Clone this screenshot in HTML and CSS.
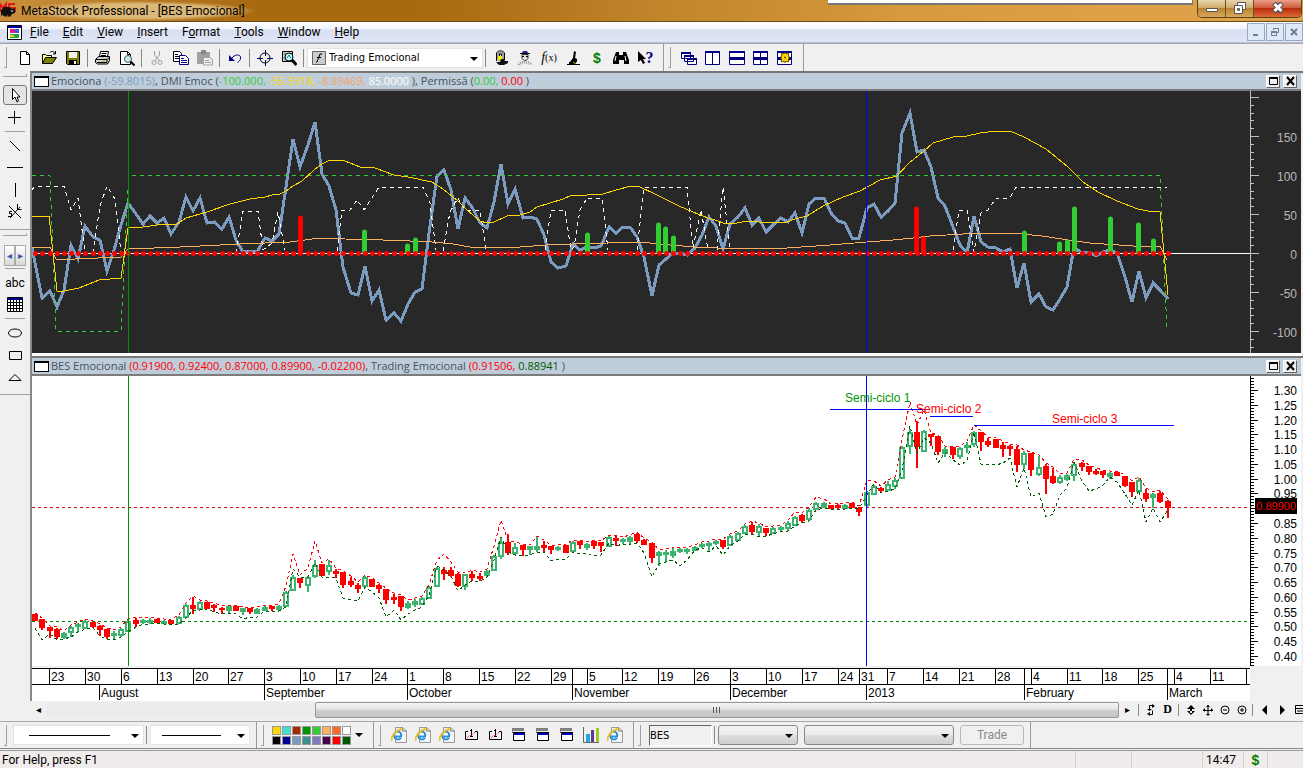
FILE: index.html
```
<!DOCTYPE html>
<html lang="en">
<head>
    <meta charset="utf-8">
    <title>MetaStock Professional - [BES Emocional]</title>
    <link rel="stylesheet" href="styles.css">
</head>
<body>
    <!-- shared icons -->
    <svg class="symbols" width="0" height="0">
        <symbol id="ie" viewBox="0 0 16 16">
            <path d="M4.500.5h7l4 3.500v11.500h-11z" fill="#f6f6f6" stroke="#999"/>
            <path d="M11.500.5v3.500h4" fill="none" stroke="#777"/>
            <path d="M10 9.500H3.500a3.500 3.500 0 1 1 6.700-1.500z" fill="#fff" stroke="#2a8fd8" stroke-width="2"/>
            <path d="M3.500 9.500a3.500 3.500 0 0 0 6.300 1.500" fill="none" stroke="#2a8fd8" stroke-width="2"/>
            <path d="M1 13.500C-1 10 7 1 11.500 2.500" fill="none" stroke="#f0c020" stroke-width="2"/>
        </symbol>
        <symbol id="gap" viewBox="0 0 16 16">
            <path d="M5 4.500H2.500v8h12v-8H12" fill="none" stroke="#000"/>
            <path d="M8.500 2v8M7 3.500h1.500M7 9.500h3" fill="none" stroke="#000"/>
            <path d="M4 11l3-3 1 1 4-4" fill="none" stroke="#e00" stroke-dasharray="1 1"/>
        </symbol>
        <symbol id="win" viewBox="0 0 16 16">
            <path d="M1 1h12v3H1z" fill="#808080"/>
            <path d="M2.500 6.500h11v7h-11z" fill="#fff" stroke="#000"/>
            <path d="M2 5h12v1H2z" fill="#000"/>
            <path d="M3 6h10v2H3z" fill="#0000c0"/>
            <path d="M1.500 4v2" stroke="#808080"/>
        </symbol>
    </svg>

    <header class="titlebar">
        <svg class="logo" width="16" height="18" viewBox="0 0 16 18">
            <path d="M0 12V4l3 4 3-4v8M15 4H9v4h6v3H8" fill="none" stroke="#e01818" stroke-width="2"/>
            <path d="M1 10l3-3h5l3 2 3-1v5l-3 1-2 3-2-2-3 2-2-3-2 2z" fill="#111"/>
            <path d="M3 16l2-5M8 17l1-5" stroke="#111"/>
            <path d="M11 10h2v2h-2z" fill="#59b"/>
        </svg>
        <h1>MetaStock Professional - [BES Emocional]</h1>
        <div class="behind"></div>
        <div class="winbuttons">
            <button aria-label="Minimize"><svg width="14" height="12"><path d="M1.500 6.500h11v3h-11z" fill="#fff" stroke="#555"/></svg></button>
            <button aria-label="Restore"><svg width="14" height="12"><path d="M4.500.5h8v7h-8z" fill="#fff" stroke="#555"/><path d="M1.500 3.500h8v8h-8z" fill="#fff" stroke="#555"/><path d="M4.500 6.500h2v2h-2z" fill="#c93" stroke="#555"/></svg></button>
            <button class="close" aria-label="Close"><svg width="14" height="12"><path d="M3 1l8 9M11 1l-8 9" stroke="#555" stroke-width="5"/><path d="M3.500 2l7 7M10.500 2l-7 7" stroke="#fff" stroke-width="3"/></svg></button>
        </div>
    </header>

    <nav class="menubar">
        <svg class="docicon" width="15" height="15"><path d="M.5.5h14v14H.5z" fill="#fff" stroke="#000"/><path d="M1 1h13v2H1z" fill="#0000a0"/><path d="M3 4h9v4H3z" fill="#e0207a"/><path d="M8 4h4v4H8z" fill="#3060e0"/><path d="M3 9h9v4H3z" fill="#20a040"/><path d="M3 10h4v2H3z" fill="#f0d020"/></svg>
        <a href="#"><u>F</u>ile</a>
        <a href="#"><u>E</u>dit</a>
        <a href="#"><u>V</u>iew</a>
        <a href="#"><u>I</u>nsert</a>
        <a href="#">F<u>o</u>rmat</a>
        <a href="#"><u>T</u>ools</a>
        <a href="#"><u>W</u>indow</a>
        <a href="#"><u>H</u>elp</a>
        <div class="mdi">
            <button aria-label="Minimize document"><svg width="10" height="10"><path d="M2 7h5v2H2z" fill="#6b7f96"/></svg></button>
            <button aria-label="Restore document"><svg width="10" height="10"><path d="M3.500 3V1.500h5v4H7M1.500 4.500h5v4h-5z" fill="none" stroke="#6b7f96"/><path d="M3 1h6v1H3zM1 4h6v2H1z" fill="#6b7f96"/></svg></button>
            <button aria-label="Close document"><svg width="10" height="10"><path d="M2 2l6 6M8 2L2 8" stroke="#6b7f96" stroke-width="2"/></svg></button>
        </div>
    </nav>

    <div class="toolbar">
        <i class="grip"></i>
        <button aria-label="New"><svg width="16" height="16"><path d="M3.500 1.500h6l3 3v10h-9z" fill="#fff" stroke="#000"/><path d="M9.500 1.500v3h3" fill="none" stroke="#000"/></svg></button>
        <button aria-label="Open"><svg width="16" height="16"><path d="M1.500 13.500v-9h3l1 1h5v2" fill="#ff9" stroke="#000"/><path d="M1.500 13.500l3-6h11l-4 6z" fill="#808000" stroke="#000"/><path d="M9 2.500c2-2 4-1 5 1M14.500 1v3H12" fill="none" stroke="#000"/></svg></button>
        <button aria-label="Save"><svg width="16" height="16"><path d="M1.500 1.500h13v13h-12l-1-1z" fill="#808000" stroke="#000"/><path d="M4 2h8v6H4z" fill="#f0f0f0"/><path d="M4 10h8v4H4z" fill="#000"/><path d="M9 11h2v3H9z" fill="#fff"/></svg></button>
        <i class="sep"></i>
        <button aria-label="Print"><svg width="16" height="16"><path d="M4.500 6.500l1-5h8l-1 5" fill="#fff" stroke="#000"/><path d="M6.500 3.500h5M6 5.500h5" stroke="#000"/><path d="M.5 9.500l3-3h11v4l-2 3.500H2.500l-2-1.500z" fill="#ccc" stroke="#000"/><path d="M1 9.500h11l2-2M2 12.500h10v-3" fill="none" stroke="#000"/><path d="M7 11h3" stroke="#cc0"/></svg></button>
        <button aria-label="Print preview"><svg width="16" height="16"><path d="M1.500 1.500h7l3 3v10h-10z" fill="#fff" stroke="#000"/><path d="M8.500 1.500v3h3" fill="none" stroke="#000"/><circle cx="9" cy="9" r="3.500" fill="#bfeeee" stroke="#555"/><path d="M11.500 11.500l4 4" stroke="#000" stroke-width="2"/></svg></button>
        <i class="sep"></i>
        <button aria-label="Cut"><svg width="16" height="16"><path d="M5.500 1v4l5 6M10.500 1v4l-5 6" fill="none" stroke="#a0a0a0"/><circle cx="5" cy="12.500" r="2" fill="none" stroke="#a0a0a0"/><circle cx="11" cy="12.500" r="2" fill="none" stroke="#a0a0a0"/></svg></button>
        <button aria-label="Copy"><svg width="16" height="16"><path d="M.5 1.500h6l2 2v8h-8z" fill="#fff" stroke="#000"/><path d="M2 4.500h3M2 6.500h5M2 8.500h5" stroke="#000"/><path d="M6.500 5.500h6l3 3v6h-9z" fill="#fff" stroke="#000080"/><path d="M8 8.500h3M8 10.500h6M8 12.500h6" stroke="#000080"/></svg></button>
        <button aria-label="Paste"><svg width="16" height="16"><path d="M0 2h13v12H0z" fill="#a0a0a0"/><path d="M4 0h5v4H4z" fill="#888"/><path d="M6.500 7.500h6l3 2v5.500h-9z" fill="#f0f0f0" stroke="#a0a0a0"/><path d="M8 10.500h4M8 12.500h6" stroke="#a0a0a0"/></svg></button>
        <i class="sep"></i>
        <button aria-label="Undo"><svg width="16" height="16"><path d="M2 5v6h6z" fill="#000080"/><path d="M5 8c3-4 9-4 8.500 0 0 2-1 3-3 4.500" fill="none" stroke="#000080"/></svg></button>
        <i class="sep"></i>
        <button aria-label="Crosshair"><svg width="16" height="16"><circle cx="8" cy="8" r="5" fill="none" stroke="#000"/><path d="M8.500 0v6M8.500 10v6M0 8.500h6M10 8.500h6" stroke="#000080"/></svg></button>
        <button aria-label="Zoom chart"><svg width="16" height="16"><path d="M1.500 1.500h10v10h-10z" fill="#ddd" stroke="#000"/><path d="M2 4h9M2 8h9M4 2v9" stroke="#888"/><circle cx="8" cy="7" r="4" fill="#bff" stroke="#000"/><path d="M6 8l2-3 2 3" stroke="#088" fill="none"/><path d="M11 10l4.500 5" stroke="#000" stroke-width="3"/></svg></button>
        <i class="sep"></i>
        <div class="combo white indicator">
            <svg width="14" height="14"><path d="M.5.5h13v13H.5z" fill="#ccc" stroke="#666"/><path d="M4 11h1l3-8h2M5 6.500h4" fill="none" stroke="#000"/></svg>
            <select aria-label="Indicator"><option>Trading Emocional</option></select>
        </div>
        <i class="sep"></i>
        <button aria-label="System tester"><svg width="16" height="16"><path d="M3.500 11V3l2-2h4l2 2v7" fill="#eee" stroke="#000"/><path d="M5 3h5v7H5z" fill="#fff" stroke="#555"/><path d="M5 6h4v4H5z" fill="#ee0"/><path d="M6.500 6V4h2v2" fill="none" stroke="#000"/><path d="M8 9h3l1 2h3v2l-4 2H6l-3-3h4z" fill="#111"/></svg></button>
        <button aria-label="Expert advisor"><svg width="16" height="16"><path d="M5 3l1-2h4l1 2z" fill="#229"/><path d="M3 3.500h10M5 6.500h2M9 6.500h2" stroke="#000"/><path d="M5 4.500h6v4l-2 2H7l-2-2z" fill="#ddd" stroke="#333"/><path d="M5 6.500h2M9 6.500h2" stroke="#000"/><path d="M2 15c1-4 11-4 12 0" fill="none" stroke="#999" stroke-width="3" stroke-dasharray="1 1"/></svg></button>
        <button class="fx" aria-label="Indicator builder"><em>f</em><small>(x)</small></button>
        <button aria-label="The Explorer"><svg width="16" height="16"><path d="M9 1l2 1-1 6 2 1v3H5l3-4z" fill="#000"/><path d="M2 14.500h13" stroke="#000"/><path d="M4 12h7v2H4z"/><path d="M8 12l3 2" stroke="#cc0"/></svg></button>
        <button class="dollar" aria-label="Quote center">$</button>
        <button aria-label="Find"><svg width="16" height="16"><path d="M3 2h3v3h4V2h3l3 8v4h-5v-4H6v4H0v-4z" fill="#000"/><path d="M3 6l-1 5M12 6l1 5" stroke="#fff"/></svg></button>
        <button class="help" aria-label="Context help"><svg width="9" height="14"><path d="M1 0v11l3-2 2 4 2-1-2-4h3z" fill="#000"/></svg>?</button>
        <i class="end"></i><i class="grip"></i>
        <button aria-label="Cascade"><svg width="16" height="16"><path d="M.5 2.500h9v6h-9zM3.500 5.500h9v6h-9zM6.500 8.500h9v6h-9z" fill="#fff" stroke="#000080"/><path d="M0 2h10v2H0zM3 5h10v2H3zM6 8h10v2H6z" fill="#000080"/></svg></button>
        <button aria-label="Tile columns"><svg width="16" height="16"><path d="M.5 1.500h14v13H.5zM7.500 1v13" fill="#fff" stroke="#000080"/><path d="M0 1h15v2H0z" fill="#000080"/></svg></button>
        <button aria-label="Tile rows"><svg width="16" height="16"><path d="M.5 1.500h15v13H.5z" fill="#fff" stroke="#000080"/><path d="M0 1h16v2H0zM0 7h16v3H0z" fill="#000080"/></svg></button>
        <button aria-label="Tile"><svg width="16" height="16"><path d="M.5 1.500h14v13H.5zM7.500 1v13" fill="#fff" stroke="#000080"/><path d="M0 1h15v2H0zM0 7h15v3H0z" fill="#000080"/></svg></button>
        <button aria-label="Stack charts"><svg width="16" height="16"><path d="M.5 1.500h14v13H.5z" fill="#fff" stroke="#000080"/><path d="M0 1h15v2H0zM0 7h15v3H0z" fill="#000080"/><path d="M7 3h2v1l2-1 1 1-1 2h1v3h-1l1 2-1 1-2-1v1H7v-1l-2 1-1-1 1-2H4V6h1L4 4l1-1 2 1z" fill="#fd0" stroke="#640"/><circle cx="8" cy="7.500" r="1" fill="#640"/></svg></button>
        <i class="end"></i>
    </div>

    <main>
        <aside class="drawbar">
            <i class="hgrip"></i>
            <button class="on" aria-label="Pointer"><svg width="16" height="16"><path d="M5.500 1.500v11l2.500-2.500 2 5 1.500-1-1.500-4h3z" fill="#fff" stroke="#000"/></svg></button>
            <button aria-label="Cross"><svg width="16" height="16"><path d="M7.500 1v13M1 7.500h13" stroke="#000"/></svg></button>
            <i class="hsep"></i>
            <button aria-label="Trendline"><svg width="16" height="16"><path d="M3 3l10 10" stroke="#000"/></svg></button>
            <button aria-label="Horizontal line"><svg width="16" height="16"><path d="M0 7.500h16" stroke="#000"/></svg></button>
            <button aria-label="Vertical line"><svg width="16" height="16"><path d="M8.500 1v14" stroke="#000"/></svg></button>
            <button aria-label="Speed lines"><svg width="16" height="16"><path d="M2 2l12 12M3 14L13 3M10.500 0v5.500h4M5 7.500H2.500v2H4.500v3H1" fill="none" stroke="#000"/></svg></button>
            <i class="hend"></i>
            <i class="hgrip"></i>
            <div class="pager"><button aria-label="Previous tools">◂</button><button aria-label="Next tools">▸</button></div>
            <i class="hsep"></i>
            <button class="abc" aria-label="Text">abc</button>
            <button aria-label="Grid"><svg width="16" height="16"><path d="M.5.5h15v14H.5zM.5 5.500h15M.5 8.500h15M.5 11.500h15M3.500 3v12M6.500 3v12M9.500 3v12M12.500 3v12" fill="#fff" stroke="#000"/><path d="M1 1h14v2H1z" fill="#000090"/></svg></button>
            <i class="hsep"></i>
            <button aria-label="Ellipse"><svg width="16" height="16"><ellipse cx="8" cy="8" rx="6.500" ry="4" fill="none" stroke="#000"/></svg></button>
            <button aria-label="Rectangle"><svg width="16" height="16"><path d="M2.500 4.500h12v8h-12z" fill="none" stroke="#000"/></svg></button>
            <button aria-label="Triangle"><svg width="16" height="16"><path d="M2 11.500l6-6 6 6z" fill="none" stroke="#000"/></svg></button>
            <i class="hend"></i>
        </aside>

        <div class="charts">
            <section class="panel">
                <h2>
                    <i class="mini"></i>
                    <span>Emociona <b class="steel">(-59.8015)</b>, DMI Emoc (<b class="lime">-100.000,</b> <b class="gold">-55.5918,</b> <b class="peach">-8.89469,</b> <b class="white">85.0000</b> ), Permissã (<b class="lime">0.00,</b> <b class="red">0.00</b> )</span>
                    <button aria-label="Maximize"><svg width="11" height="10"><path d="M1.500 1.500h8v7h-8z" fill="none" stroke="#000"/><path d="M1 1h9v2H1z"/></svg></button>
                    <button aria-label="Close"><svg width="11" height="10"><path d="M2 1l7 8M9 1L2 9" stroke="#000" stroke-width="2"/></svg></button>
                </h2>
                <div class="plot dark">
                    <svg id="indicator" height="262"></svg>
                    <svg id="indicatorAxis" class="axis" height="262"></svg>
                </div>
            </section>
            <section class="panel">
                <h2>
                    <i class="mini"></i>
                    <span>BES Emocional <b class="red">(0.91900, 0.92400, 0.87000, 0.89900, -0.02200)</b>, Trading Emocional <b class="red">(0.91506,</b> <b class="forest">0.88941</b> )</span>
                    <button aria-label="Maximize"><svg width="11" height="10"><path d="M1.500 1.500h8v7h-8z" fill="none" stroke="#000"/><path d="M1 1h9v2H1z"/></svg></button>
                    <button aria-label="Close"><svg width="11" height="10"><path d="M2 1l7 8M9 1L2 9" stroke="#000" stroke-width="2"/></svg></button>
                </h2>
                <div class="plot">
                    <svg id="price" height="290"></svg>
                    <svg id="priceAxis" class="axis" height="290"></svg>
                </div>
                <div class="dates"><svg id="dates" height="33"></svg></div>
            </section>
            <div class="scroller">
                <button aria-label="Scroll left">◂</button>
                <div class="track"><div class="thumb"></div></div>
                <button aria-label="Scroll right">▸</button>
                <i class="sep"></i>
                <button aria-label="Refresh"><svg width="10" height="12"><path d="M6.500 1.500H3.500v4M3.500 10.500h3v-4" fill="none" stroke="#000"/><path d="M6 0l3 2-3 2zM4 8L1 10l3 2zM1 5h5L3.500 7z"/></svg></button>
                <button class="period" aria-label="Daily">D</button>
                <i class="sep"></i>
                <button aria-label="Rescale"><svg width="10" height="12"><path d="M5 1l4 4H1zM5 11l4-4H1zM4 3h2v6H4z"/></svg></button>
                <button aria-label="Move"><svg width="10" height="12"><path d="M0 6.500h10M5 1v10" stroke="#000"/><path d="M5 1l2 2H3zM5 12l2-2H3zM0 6l2-2v4zM10 6L8 4v4z"/></svg></button>
                <button aria-label="Zoom out"><svg width="10" height="12"><circle cx="5" cy="6" r="4" fill="none" stroke="#000"/><path d="M3 6h4" stroke="#000"/></svg></button>
                <button aria-label="Zoom in"><svg width="10" height="12"><circle cx="5" cy="6" r="4" fill="none" stroke="#000"/><path d="M3 6h4M5 4v4" stroke="#000"/></svg></button>
                <i class="sep"></i>
                <button aria-label="Back"><svg width="10" height="12"><path d="M7 1v10L2 6z"/></svg></button>
                <button aria-label="Forward"><svg width="10" height="12"><path d="M3 1v10l5-5z"/></svg></button>
                <button aria-label="Options"><svg width="10" height="12"><path d="M1.500 1.500h9v8h-9zM1 4.500h9M3 7h6" fill="none" stroke="#000"/></svg></button>
            </div>
        </div>
    </main>

    <div class="toolbar lower">
        <i class="grip"></i>
        <div class="combo white style"><select aria-label="Line style"><option></option></select></div>
        <i class="sep"></i>
        <div class="combo white weight"><select aria-label="Line weight"><option></option></select></div>
        <i class="end"></i><i class="grip"></i>
        <div class="palette" id="palette"></div>
        <button class="more" aria-label="More colors"><i class="caret"></i></button>
        <i class="end"></i><i class="grip"></i>
        <button aria-label="Web page 1"><svg width="16" height="16"><use href="#ie"/></svg></button>
        <button aria-label="Web page 2"><svg width="16" height="16"><use href="#ie"/></svg></button>
        <button aria-label="Web page 3"><svg width="16" height="16"><use href="#ie"/></svg></button>
        <button aria-label="Download 1"><svg width="16" height="16"><use href="#gap"/></svg></button>
        <button aria-label="Download 2"><svg width="16" height="16"><use href="#gap"/></svg></button>
        <button aria-label="Layout 1"><svg width="16" height="16"><use href="#win"/></svg></button>
        <button aria-label="Layout 2"><svg width="16" height="16"><use href="#win"/></svg></button>
        <button aria-label="Layout 3"><svg width="16" height="16"><use href="#win"/></svg></button>
        <button aria-label="Report"><svg width="16" height="16"><path d="M.5 0v15.500H16" fill="none" stroke="#666"/><path d="M3 7h4v8H3z" fill="#2ad"/><path d="M8 3h3v12H8z" fill="#639"/><path d="M13 1h3v14h-3z" fill="#9c2"/></svg></button>
        <button aria-label="Web page 4"><svg width="16" height="16"><use href="#ie"/></svg></button>
        <i class="end"></i><i class="grip"></i>
        <input class="symbol" type="text" value="BES" aria-label="Symbol">
        <i class="sep"></i>
        <div class="combo gray"><select aria-label="Account"><option></option></select></div>
        <div class="combo gray order"><select aria-label="Order type"><option></option></select></div>
        <button class="trade" disabled>Trade</button>
        <i class="end"></i>
    </div>

    <footer class="status">
        <span class="msg">For Help, press F1</span>
        <span class="cell"></span>
        <span class="cell big"></span>
        <span class="cell time">14:47</span>
        <span class="cell money">$</span>
        <span class="cell last"></span>
    </footer>

    <script src="chart.js"></script>
</body>
</html>
```
FILE: styles.css
```
* {
    box-sizing: border-box;
}

body {
    margin: 0;
    min-height: 100vh;
    display: flex;
    flex-direction: column;
    overflow: hidden;
    background: #f0f0f0;
    color: #000;
    font: 12px/16px Roboto, "Noto Sans", sans-serif;
}

button, select, input {
    font: inherit;
    color: inherit;
    margin: 0;
    padding: 0;
}

button {
    border: none;
    background: none;
    display: flex;
    align-items: center;
    justify-content: center;
}

svg {
    display: block;
    flex: none;
}

.symbols {
    position: absolute;
}

/* title bar */
.titlebar {
    display: flex;
    align-items: flex-start;
    height: 22px;
    border-bottom: 1px solid #6b4a1a;
    background: linear-gradient(90deg, #c98f3c 0, #a8690f 20%, #a8690f 32%, #c0842a 50%, #d79a3c 70%, #e0a045 85%, #dba24c 100%);
}

.titlebar h1 {
    margin: 1px 0 0;
    padding: 0 12px 0 5px;
    font-size: 12px;
    font-weight: normal;
    line-height: 20px;
    background: radial-gradient(closest-side, #dcb878 70%, transparent);
}

.behind {
    margin-left: auto;
    width: 28%;
    height: 5px;
    background: #fff;
    border: solid #777;
    border-width: 0 1px 2px 0;
}

.winbuttons {
    display: flex;
    margin: 0 1px 0 4px;
    border: 1px solid #5f4214;
    border-top: none;
    border-radius: 0 0 5px 5px;
    overflow: hidden;
}

.winbuttons button {
    width: 28px;
    height: 17px;
    padding-bottom: 2px;
    border-right: 1px solid #6f5224;
    background: linear-gradient(#e8d5b0, #d0a968 45%, #b98332 50%, #d8a85c);
}

.winbuttons .close {
    width: 47px;
    border: none;
    background: linear-gradient(#e9a08a, #cf5a3c 45%, #b82c0c 50%, #de6a35);
}

/* menu */
.menubar {
    display: flex;
    align-items: center;
    height: 21px;
    padding-left: 7px;
    border-bottom: 1px solid #b8bdd0;
    background: linear-gradient(#fff, #f0f3fb 35%, #d8dff0 40%, #e0e5f6);
}

.menubar a {
    margin-left: 14px;
    color: #000;
    text-decoration: none;
}

.menubar .docicon + a {
    margin-left: 8px;
}

.mdi {
    display: flex;
    gap: 1px;
    margin-left: auto;
}

.mdi button {
    width: 18px;
    height: 18px;
    border: 1px solid #9aaabd;
    background: #dfeaf8;
}

/* toolbars */
.toolbar {
    display: flex;
    align-items: center;
    height: 28px;
    border-top: 1px solid #a8a8a8;
}

.toolbar button {
    width: 24px;
    height: 24px;
}

.grip {
    width: 3px;
    height: 21px;
    margin: 0 6px 0 4px;
    border: solid #a0a0a0;
    border-width: 0 1px 1px 0;
}

.sep {
    width: 1px;
    height: 18px;
    margin: 0 3px 0 2px;
    background: #888;
}

.end {
    align-self: stretch;
    width: 1px;
    margin-left: 6px;
    background: #999;
}

.combo {
    position: relative;
    display: flex;
    align-items: center;
    height: 20px;
}

.combo select {
    flex: 1;
    height: 18px;
    appearance: none;
    border: none;
    background: none;
    outline: none;
}

.combo::after, .caret {
    content: "";
    border: 4px solid transparent;
    border-top-color: #000;
    border-bottom: none;
}

.combo::after {
    position: absolute;
    right: 4px;
    top: 8px;
}

.white {
    background: #fff;
}

.combo.white {
    border: 1px solid #e2e3ea;
}

.indicator {
    width: 176px;
    padding-left: 4px;
    gap: 3px;
}

.indicator select {
    font: 11px "DejaVu Sans Condensed", "Liberation Sans", sans-serif;
}

.style {
    width: 131px;
}

.style select {
    background: linear-gradient(#000, #000) 15px 50% / 81px 1px no-repeat;
}

.weight {
    width: 100px;
}

.weight select {
    background: linear-gradient(#000, #000) 11px 50% / 59px 1px no-repeat;
}

.toolbar .fx {
    font: 14px "Liberation Serif", serif;
}

.fx small {
    font-size: 10px;
}

.toolbar .dollar, .money {
    color: #008000;
    font: bold 14px "Liberation Sans", sans-serif;
}

.toolbar .help {
    color: #000080;
    font: bold 16px "Liberation Serif", serif;
}

.lower {
    border-bottom: 1px solid #888;
}

.palette {
    display: grid;
    grid-template-columns: repeat(8, 9px);
    gap: 1px;
    margin-left: 2px;
}

.palette button {
    width: 9px;
    height: 9px;
    border: 1px solid #999;
}

.toolbar .more {
    width: 16px;
}

.symbol {
    width: 63px;
    height: 21px;
    margin-left: 2px;
    border: 1px solid;
    border-color: #666 #fff #fff #666;
    background: #f0f0f0;
    font: 11px "DejaVu Sans Condensed", sans-serif;
}

.gray {
    width: 80px;
    margin-right: 6px;
    border: 1px solid #888;
    border-radius: 3px;
    background: linear-gradient(#f2f2f2, #ebebeb 48%, #ddd 52%, #cfcfcf);
}

.order {
    width: 150px;
}

.toolbar .trade {
    width: 64px;
    height: 20px;
    border: 1px solid #b5babf;
    border-radius: 3px;
    color: #888;
}

/* drawing tools */
main {
    display: flex;
    flex: 1;
}

.drawbar {
    width: 30px;
    flex: none;
    display: flex;
    flex-direction: column;
    align-items: center;
    padding-top: 3px;
}

.drawbar > button {
    width: 24px;
    height: 22px;
}

.drawbar .on {
    height: 20px;
    margin: 8px 0 2px;
    border: 1px solid #777;
    border-radius: 3px;
    background: #e4e4e4;
}

.hgrip {
    width: 24px;
    height: 3px;
    border: solid #a0a0a0;
    border-width: 0 1px 1px 0;
}

.hsep {
    width: 20px;
    height: 1px;
    margin: 2px 0 3px;
    background: #a0a0a0;
}

.hend {
    align-self: stretch;
    height: 1px;
    margin: 6px 0 3px;
    background: #a0a0a0;
}

.pager {
    display: flex;
    margin-top: 9px;
}

.pager button {
    width: 11px;
    height: 21px;
    border: 1px solid #aaa;
    background: linear-gradient(#fff, #d8d8d8);
    color: #3a55a5;
    font-size: 10px;
}

/* chart windows */
.charts {
    flex: 1;
    min-width: 0;
    display: flex;
    flex-direction: column;
}

.panel {
    border-left: 2px solid #888;
    border-top: 2px solid #777;
}

.panel h2 {
    display: flex;
    align-items: center;
    height: 16px;
    margin: 0 2px 0 0;
    padding: 0 4px 0 2px;
    border-bottom: 2px solid #7c7c7c;
    box-sizing: content-box;
    background: #bfcddb;
    color: #46525c;
    font: 11px/16px "Open Sans", sans-serif;
}

.panel h2 span {
    flex: 1;
    white-space: nowrap;
}

.panel h2 b {
    font-weight: normal;
    background: none;
}

.mini {
    width: 15px;
    height: 11px;
    margin-right: 2px;
    border: 1px solid #000;
    border-top-width: 2px;
    background: #fff;
}

.panel h2 button {
    width: 14px;
    height: 13px;
    margin-left: 3px;
    border: 1px solid;
    border-color: #fff #666 #666 #fff;
    background: #f0f0f0;
}

.steel { color: #7b9cc0; }
.lime { color: #32cd32; }
.gold { color: #ffd700; }
.peach { color: #f4a460; }
.panel .white { color: #fff; }
.red { color: #f00; }
.forest { color: #005a00; }

.plot {
    display: flex;
    background: #fff;
    margin-right: 2px;
}

.dark {
    background: #282828;
    border-bottom: 3px solid #fff;
}

.plot svg:first-child {
    flex: 1;
    min-width: 0;
}

.plot .axis {
    width: 51px;
}

.axis text {
    text-anchor: end;
}

.plot text, .dates text {
    font: 12px "Liberation Sans", Arial, sans-serif;
}

.plot .last-price {
    font-size: 11px;
}

.dates {
    margin-right: 53px;
    border-top: 2px solid #f0f0f0;
    background: #fff;
}

.dates svg {
    width: 100%;
}

/* scrollbar */
.scroller {
    display: flex;
    align-items: center;
    height: 17px;
    margin-right: -4px;
}

.scroller > button {
    width: 17px;
    height: 16px;
    flex: none;
    font-size: 10px;
}

.scroller .sep {
    height: 12px;
}

.scroller .period {
    font: bold 12px "Liberation Serif", serif;
}

.track {
    flex: 1;
    display: flex;
    justify-content: flex-end;
    height: 16px;
    background: #ececec;
}

.thumb {
    width: 75%;
    border: 1px solid #979797;
    border-radius: 2px;
    background:
        repeating-linear-gradient(90deg, #555 0 1px, transparent 1px 3px) 50% 50% / 8px 6px no-repeat,
        linear-gradient(#f4f4f4, #e5e5e5 45%, #cfcfd1 50%, #c4c4c6);
}

/* status bar */
.status {
    display: flex;
    height: 18px;
    margin-top: 1px;
    border-top: 1px solid #999;
    background: #f0eceb;
    line-height: 18px;
}

.msg {
    flex: 1;
    padding-left: 2px;
}

.cell {
    width: 56px;
    border-left: 1px solid #d4d0cf;
}

.big {
    width: 71px;
}

.time {
    width: 41px;
    padding-left: 3px;
}

.status .money {
    width: 24px;
    line-height: 18px;
    text-align: center;
}

.last {
    width: 36px;
}
```
FILE: chart.js
```
// one bar per trading day
const STEP = 7.166;
const BARS = 159;
const barX = i => Math.round(35.3 + i * STEP);

const line = (x1, y1, x2, y2, color, extra = '') =>
    `<path d="M${x1} ${y1}L${x2} ${y2}" stroke="${color}" fill="none" ${extra}/>`;
const poly = (points, color, extra = '') =>
    `<polyline points="${points}" stroke="${color}" fill="none" shape-rendering="crispEdges" ${extra}/>`;
const rect = (x, y, w, h, color) =>
    `<rect x="${x}" y="${y}" width="${w}" height="${h}" fill="${color}"/>`;
const label = (x, y, text, color, extra = '') => `<text x="${x}" y="${y}" fill="${color}" ${extra}>${text}</text>`;

function draw(id, left, top, content) {
    document.getElementById(id).innerHTML = `<g transform="translate(${-left} ${-top})">${content}</g>`;
}

// ---- indicator window ----
const emotion = [263, 298, 291, 307, 290, 245, 259, 226, 237, 240, 271, 250, 225, 203, 214, 224, 216, 223, 218, 234,
    222, 197, 211, 198, 223, 222, 229, 217, 240, 252, 251, 252, 238, 241, 234, 187, 139, 167, 145, 122,
    174, 186, 210, 267, 293, 295, 266, 301, 290, 320, 313, 321, 304, 292, 289, 233, 176, 170, 190, 229,
    198, 207, 223, 228, 202, 164, 204, 189, 218, 217, 219, 235, 262, 268, 266, 244, 250, 247, 248, 246,
    227, 233, 227, 227, 237, 257, 296, 265, 259, 253, 253, 255, 248, 235, 217, 226, 249, 224, 217, 208,
    225, 218, 232, 225, 218, 222, 213, 233, 204, 198, 198, 213, 221, 223, 238, 238, 208, 204, 217, 211,
    203, 133, 113, 152, 150, 167, 198, 206, 227, 245, 253, 216, 242, 247, 248, 252, 249, 288, 263, 302,
    294, 307, 310, 299, 287, 247, 253, 252, 256, 252, 250, 253, 277, 302, 271, 298, 283, 290, 299];

const dmi = '32,217 49,216 57,291 64,291 79,288 99,280 121,278 128,228 143,227 164,224 177,224 186,218 207,212 230,204 250,199 265,197 272,195 280,194 286,191 293,186 302,181 314,170 322,164 330,160 345,161 360,167 375,168 394,175 408,177 432,182 443,189 458,201 467,210 480,221 487,223 494,222 507,216 520,215 530,212 537,207 550,203 563,199 572,195 587,195 603,194 616,190 631,186 638,186 659,196 665,199 679,206 693,212 708,218 718,221 723,223 737,223 747,221 770,223 787,222 795,219 807,216 823,206 843,197 860,191 880,180 897,176 909,163 924,151 933,143 953,137 967,136 980,133 988,132 1010,131 1024,137 1046,149 1068,167 1083,182 1098,192 1117,201 1138,209 1148,211 1160,212 1164,253 1168,295';
const average = '32,247 50,247 56,259 75,259 121,257 128,249 180,247 240,244 290,242 320,238 345,239 383,240 410,241 432,242 453,244 470,247 487,248 520,247 547,245 573,244 607,243 630,242 650,243 670,245 695,247 717,248 787,248 830,245 867,242 893,240 913,238 930,236 980,233 1012,233 1042,236 1075,241 1090,243 1133,246 1160,246 1167,260';
const threshold = [
    '32,190 35,186 64,186 71,210 78,198 85,253',
    '93,253 100,206 107,186 115,199 121,253',
    '236,253 243,211 258,211 263,250 272,243 278,212 285,250',
    '337,251 342,210 350,210 357,200 364,210 379,187 423,187 430,203 436,250',
    '443,251 450,212 458,198 465,210 480,210 486,250',
    '545,250 551,210 565,210 571,250 574,247 580,210 587,198 602,198 608,250',
    '637,250 644,187 687,187 693,248 701,210 708,250',
    '717,250 723,187 730,250',
    '953,250 959,210 967,210 974,252 981,213 988,210 996,198 1010,198 1016,187 1167,187'];
const buys = [[364, 231], [407, 245], [415, 239], [587, 234], [658, 224], [665, 228], [673, 237], [1024, 232],
    [1059, 243], [1067, 241], [1074, 208], [1110, 218], [1138, 224], [1153, 240]];
const sells = [[300, 217], [916, 208], [923, 238]];

let out = line(32, 253.5, 1260, 253.5, '#fff');
out += poly('32,247 ' + emotion.map((y, i) => barX(i) + ',' + y).join(' '), '#7b9cc0', 'stroke-width="3"');
out += poly('32,175.5 50,175.5 53,250 56,331 121,331 128,187', '#32cd32', 'stroke-dasharray="4 4"');
out += poly('132,175.5 1160,175.5 1167,331', '#32cd32', 'stroke-dasharray="4 4"');
threshold.forEach(p => out += poly(p, '#fff', 'stroke-dasharray="4 4"'));
out += poly(average, '#ffb060');
out += poly(dmi, '#ffd700');
buys.forEach(([x, y]) => out += line(x + .5, y + 1, x + .5, 252, '#32cd32', 'stroke-width="5" stroke-linecap="round"'));
sells.forEach(([x, y]) => out += line(x + .5, y + 1, x + .5, 252, '#f00', 'stroke-width="5" stroke-linecap="round"'));
for (let i = 0; i < BARS; i++) out += `<circle cx="${barX(i)}.500" cy="253.500" r="2.500" fill="#f00"/>`;
out += line(128.5, 91, 128.5, 353, '#009600');
out += line(866.5, 91, 866.5, 353, '#00f');
draw('indicator', 32, 91, out);

out = line(1250.5, 91, 1250.5, 353, '#c0c0c0');
for (let v = -120; v <= 200; v += 10) {
    const y = Math.round(253 - v * .78) + .5;
    out += line(1251, y, v % 50 ? 1254 : 1259, y, '#c0c0c0');
    if (v % 50 === 0 && v < 200) out += label(1297, y + 5.5, v, '#b8b8b8');
}
draw('indicatorAxis', 1250, 91, out);

// ---- price window ----
// color, body top, body bottom, high, low
const candles = `r614,620,614,620 r619,627,619,629 r627,630,627,637 r629,636,628,638 g633,637,632,638 g627,632,626,636
g624,626,623,631 g621,628,620,628 r622,626,622,627 r626,629,625,635 r629,636,629,638 g633,635,631,639 g629,635,628,636
g621,631,620,631 r620,623,618,626 g620,622,619,623 g620,622,618,623 r619,622,619,622 g621,623,620,623 r620,623,620,623
g617,623,616,623 g605,617,604,617 r605,608,597,613 g602,609,601,609 r602,608,602,608 r605,607,604,611 r608,609,607,613
g606,610,606,612 r606,610,606,610 g608,611,608,614 r608,611,608,613 g609,613,608,613 g607,610,606,610 r606,608,606,610
g606,609,605,610 g592,606,591,606 g577,590,575,590 r578,582,578,587 g577,585,576,591 g565,576,560,577 r564,575,564,575
g565,571,560,574 r571,573,569,577 r572,584,572,587 r581,584,577,586 r585,588,583,592 g577,586,576,586 r579,586,579,586
r585,588,584,592 r589,599,589,603 r597,599,594,603 r596,606,596,610 g603,607,601,608 g601,604,599,606 g598,604,597,604
g587,598,586,598 g568,586,567,586 r570,573,567,579 r570,575,567,576 r574,585,573,586 g574,586,574,589 r574,577,571,580
r576,578,573,580 g571,575,570,576 g556,570,555,570 g542,556,538,558 r542,552,534,554 g547,553,543,554 r545,549,545,555
g546,549,546,554 g546,549,537,551 r545,547,541,551 r546,549,546,553 g547,549,546,550 r545,552,545,552 g542,551,541,551
r541,544,541,548 g544,547,543,549 r541,545,541,548 r542,545,542,551 g537,546,536,546 r538,540,536,545 g539,541,538,543
g537,541,536,544 r534,540,533,542 r540,544,539,544 r543,557,543,562 g552,555,551,565 g552,554,550,561 g551,555,548,557
g549,551,548,552 g549,551,548,553 g547,550,546,550 g544,546,543,547 g543,545,542,551 g541,543,540,544 r540,546,540,548
g536,545,535,545 g533,540,532,540 g526,533,525,533 r525,531,522,533 g526,532,524,536 r528,532,528,535 g528,533,527,533
g527,529,526,530 g523,528,521,530 g517,525,516,525 r515,520,514,522 g510,519,508,520 g503,509,502,509 g503,507,502,507
r505,508,505,508 r505,507,504,509 g505,508,504,508 r503,507,503,507 r508,511,507,515 g492,505,491,506 g486,494,485,494
r488,490,487,492 g484,490,481,490 g480,486,478,488 g447,478,446,478 g432,446,429,453 r432,446,421,467 g431,451,430,451
r434,436,434,445 r436,451,436,454 g449,453,447,456 r447,454,447,458 g448,456,447,458 g445,447,442,452 g432,444,431,446
r432,441,432,450 r441,444,438,446 r439,447,439,447 r445,448,442,456 r446,448,445,455 r449,464,446,471 g453,464,451,468
r453,469,453,475 g467,474,456,475 r466,478,464,493 r476,482,468,483 g477,482,475,483 g475,479,474,480 g464,475,463,480
r463,466,462,470 r466,471,466,474 r471,473,469,474 r471,474,471,477 g473,476,472,478 r472,475,472,475 r476,485,476,486
r482,491,482,496 g480,491,478,492 r493,498,489,501 g494,497,493,507 r493,501,491,502 r501,507,500,517`
    .split(/\s+/).map(s => [s[0], ...s.slice(1).split(',').map(Number)]);

// places where the trading bands leave the candle
const upper = {35: 586, 36: 554, 37: 575, 38: 568, 39: 541, 40: 563, 56: 560, 57: 554, 58: 562, 64: 546, 65: 520, 66: 541,
    100: 521, 106: 512, 109: 497, 110: 499, 116: 480, 117: 481, 121: 440, 122: 402, 123: 425, 124: 410, 125: 433,
    131: 425, 145: 459, 146: 460, 154: 477};
const lower = {0: 628, 1: 640, 2: 634, 3: 640, 22: 610, 28: 614, 29: 619, 30: 617, 31: 617, 32: 611, 36: 569, 37: 577,
    38: 577, 39: 563, 40: 577, 41: 577, 42: 578, 43: 598, 44: 600, 45: 601, 46: 587, 47: 592, 48: 598, 49: 617, 50: 610,
    51: 620, 52: 614, 53: 610, 54: 607, 55: 595, 56: 566, 57: 570, 58: 576, 59: 591, 60: 585, 64: 560, 65: 537, 66: 552,
    72: 561, 73: 559, 74: 559, 75: 552, 76: 554, 77: 553, 78: 556, 79: 555, 80: 543, 85: 553, 86: 577, 87: 564, 88: 562,
    89: 560, 90: 566, 91: 560, 92: 550, 95: 546, 96: 555, 115: 508, 116: 495, 117: 484, 118: 493, 121: 470, 122: 426,
    123: 453, 124: 438, 125: 443, 126: 463, 127: 452, 128: 460, 129: 465, 130: 461, 131: 432, 132: 464, 133: 464,
    134: 465, 135: 463, 136: 458, 137: 487, 138: 468, 139: 497, 140: 493, 141: 517, 142: 514, 143: 495, 144: 488,
    145: 462, 146: 481, 147: 491, 148: 489, 149: 485, 150: 477, 151: 482, 152: 494, 153: 505, 154: 490, 155: 522,
    156: 508, 157: 522, 158: 510};

out = line(32, 507.5, 1260, 507.5, '#d01010', 'stroke-dasharray="3 3"');
out += line(32, 621.5, 1260, 621.5, '#008000', 'stroke-dasharray="3 3"');
candles.forEach(([color, top, bottom, high, low], i) => {
    const x = barX(i), fill = color === 'r' ? '#f00' : '#3cb371';
    out += rect(x - 1, high, 2, low - high + 1, fill);
    out += rect(x - 3, top, 6, bottom - top + 1, fill);
    if (color === 'g' && bottom - top > 4) out += rect(x - 1, top + 2, 2, bottom - top - 3, '#fff');
});
const bands = 'stroke-dasharray="3 3"';
out += poly(candles.map((c, i) => barX(i) + ',' + (upper[i] || c[3] - 1)).join(' '), '#f00', bands);
out += poly(candles.map((c, i) => barX(i) + ',' + (lower[i] || c[4] + 1)).join(' '), '#005a00', bands);
out += line(128.5, 376, 128.5, 666, '#009600');
out += line(866.5, 376, 866.5, 666, '#00f');
out += line(830, 409.5, 929, 409.5, '#00f') + line(930, 416.5, 973, 416.5, '#00f') + line(974, 425.5, 1174, 425.5, '#00f');
out += label(845, 402, 'Semi-ciclo 1', '#009600') + label(916, 413, 'Semi-ciclo 2', '#f00') + label(1052, 423, 'Semi-ciclo 3', '#f00');
draw('price', 32, 376, out);

out = line(1250.5, 376, 1250.5, 666, '#000');
for (let cents = 37; cents <= 134; cents++) {
    const y = Math.round(656 - (cents - 40) * 2.955) + .5;
    const major = cents % 5 === 0;
    out += line(1251, y, major ? 1258 : 1254, y, '#000');
    // the last price covers the 0.90 label
    if (major && cents >= 40 && cents <= 130 && cents !== 90) out += label(1297, y + 4.5, (cents / 100).toFixed(2), '#000');
}
out += rect(1255, 498, 42, 16, '#000') + label(1296, 510, '0.89900', '#f00', 'class="last-price"');
draw('priceAxis', 1250, 376, out);

// ---- dates ----
const days = [[49, 23], [85, 30], [121, 6], [157, 13], [193, 20], [228, 27], [264, 3], [300, 10], [336, 17], [372, 24],
    [407, 1], [443, 8], [479, 15], [515, 22], [551, 29], [572, ''], [587, 5], [622, 12], [658, 19], [694, 26], [730, 3],
    [766, 10], [802, 17], [838, 24], [859, 31], [887, 7], [923, 14], [959, 21], [995, 28], [1024, ''],
    [1031, 4], [1067, 11], [1102, 18], [1138, 25], [1167, ''], [1174, 4], [1210, 11], [1246, '']];
const months = [[99, 'August'], [264, 'September'], [407, 'October'], [572, 'November'], [730, 'December'],
    [866, '2013'], [1024, 'February'], [1167, 'March']];
out = line(32, 668.5, 1250, 668.5, '#000') + line(32, 684.5, 1250, 684.5, '#000');
days.forEach(([x, d]) => out += line(x + .5, 668, x + .5, 684, '#000') + label(x + 2, 681, d, '#000'));
months.forEach(([x, m]) => out += line(x + .5, 684, x + .5, 700, '#000') + label(x + 2, 697, m, '#000'));
draw('dates', 32, 668, out);

// ---- color palette ----
const colors = ['#ffd700', '#40e0d0', '#a52a00', '#009600', '#32cd32', '#ffb060', '#ff6a20', '#ffffff',
    '#000000', '#000090', '#7b9cc0', '#3a8f8f', '#7b7bc0', '#4a004a', '#ff0000', '#005a00'];
document.getElementById('palette').innerHTML = colors
    .map(c => `<button aria-label="Color ${c}" style="background:${c}"></button>`).join('');
```
